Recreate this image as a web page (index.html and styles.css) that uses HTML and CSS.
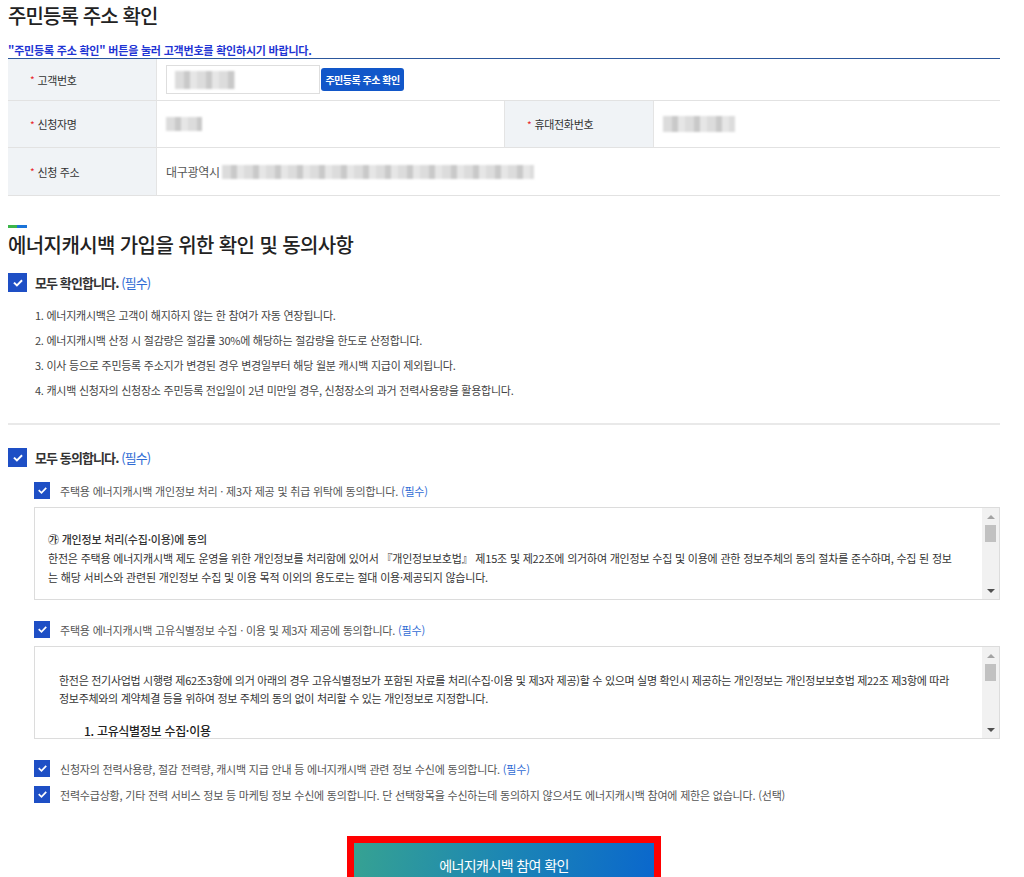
FILE: index.html
```html
<!DOCTYPE html>
<html lang="ko">
<head>
    <meta charset="utf-8">
    <title>에너지캐시백 참여 신청</title>
    <link rel="stylesheet" href="styles.css">
</head>
<body>
<div class="wrap">
    <!-- 주민등록 주소 확인 -->
    <h2 class="page-title">주민등록 주소 확인</h2>
    <p class="notice">"주민등록 주소 확인" 버튼을 눌러 고객번호를 확인하시기 바랍니다.</p>

    <div class="info-table">
        <div class="th"><span class="req">*</span>고객번호</div>
        <div class="td wide">
            <div class="input-box"><span class="blur b-cust"></span></div>
            <button class="btn-check">주민등록 주소 확인</button>
        </div>

        <div class="th"><span class="req">*</span>신청자명</div>
        <div class="td mid"><span class="blur b-name"></span></div>
        <div class="th"><span class="req">*</span>휴대전화번호</div>
        <div class="td"><span class="blur b-phone"></span></div>

        <div class="th"><span class="req">*</span>신청 주소</div>
        <div class="td wide addr">대구광역시<span class="blur b-addr"></span></div>
    </div>

    <!-- 확인 및 동의사항 -->
    <div class="sec-bar"></div>
    <h3 class="sec-title">에너지캐시백 가입을 위한 확인 및 동의사항</h3>

    <div class="chk-row all first">
        <span class="chk big"><svg viewBox="0 0 12 12"><path d="M2.6 6.3l2.3 2.2 4.5-4.6"/></svg></span>
        <span class="all-text">모두 확인합니다. <em class="must">(필수)</em></span>
    </div>
    <ul class="notes">
        <li>1. 에너지캐시백은 고객이 해지하지 않는 한 참여가 자동 연장됩니다.</li>
        <li>2. 에너지캐시백 산정 시 절감량은 절감률 30%에 해당하는 절감량을 한도로 산정합니다.</li>
        <li>3. 이사 등으로 주민등록 주소지가 변경된 경우 변경일부터 해당 월분 캐시백 지급이 제외됩니다.</li>
        <li>4. 캐시백 신청자의 신청장소 주민등록 전입일이 2년 미만일 경우, 신청장소의 과거 전력사용량을 활용합니다.</li>
    </ul>

    <hr class="divider">

    <div class="chk-row all">
        <span class="chk big"><svg viewBox="0 0 12 12"><path d="M2.6 6.3l2.3 2.2 4.5-4.6"/></svg></span>
        <span class="all-text">모두 동의합니다. <em class="must">(필수)</em></span>
    </div>

    <div class="sub">
        <div class="chk-row item gap1">
            <span class="chk"><svg viewBox="0 0 12 12"><path d="M2.6 6.3l2.3 2.2 4.5-4.6"/></svg></span>
            <span>주택용 에너지캐시백 개인정보 처리 · 제3자 제공 및 취급 위탁에 동의합니다. <em class="must">(필수)</em></span>
        </div>
        <div class="terms">
            <div class="terms-body">
                <p class="t-head">㉮ 개인정보 처리(수집·이용)에 동의</p>
                <p>한전은 주택용 에너지캐시백 제도 운영을 위한 개인정보를 처리함에 있어서 『개인정보보호법』 제15조 및 제22조에 의거하여 개인정보 수집 및 이용에 관한 정보주체의 동의 절차를 준수하며, 수집 된 정보는 해당 서비스와 관련된 개인정보 수집 및 이용 목적 이외의 용도로는 절대 이용·제공되지 않습니다.</p>
            </div>
            <div class="scroll">
                <span class="arr up"></span>
                <span class="thumb"></span>
                <span class="arr down"></span>
            </div>
        </div>

        <div class="chk-row item gap2">
            <span class="chk"><svg viewBox="0 0 12 12"><path d="M2.6 6.3l2.3 2.2 4.5-4.6"/></svg></span>
            <span>주택용 에너지캐시백 고유식별정보 수집 · 이용 및 제3자 제공에 동의합니다. <em class="must">(필수)</em></span>
        </div>
        <div class="terms">
            <div class="terms-body second">
                <p>한전은 전기사업법 시행령 제62조3항에 의거 아래의 경우 고유식별정보가 포함된 자료를 처리(수집·이용 및 제3자 제공)할 수 있으며 실명 확인시 제공하는 개인정보는 개인정보보호법 제22조 제3항에 따라 정보주체와의 계약체결 등을 위하여 정보 주체의 동의 없이 처리할 수 있는 개인정보로 지정합니다.</p>
                <p class="t-sub">1. 고유식별정보 수집·이용</p>
            </div>
            <div class="scroll">
                <span class="arr up"></span>
                <span class="thumb"></span>
                <span class="arr down"></span>
            </div>
        </div>

        <div class="chk-row item gap2">
            <span class="chk"><svg viewBox="0 0 12 12"><path d="M2.6 6.3l2.3 2.2 4.5-4.6"/></svg></span>
            <span>신청자의 전력사용량, 절감 전력량, 캐시백 지급 안내 등 에너지캐시백 관련 정보 수신에 동의합니다. <em class="must">(필수)</em></span>
        </div>
        <div class="chk-row item gap3">
            <span class="chk"><svg viewBox="0 0 12 12"><path d="M2.6 6.3l2.3 2.2 4.5-4.6"/></svg></span>
            <span>전력수급상황, 기타 전력 서비스 정보 등 마케팅 정보 수신에 동의합니다. 단 선택항목을 수신하는데 동의하지 않으셔도 에너지캐시백 참여에 제한은 없습니다. (선택)</span>
        </div>
    </div>

    <div class="btn-area">
        <button class="btn-submit">에너지캐시백 참여 확인</button>
    </div>
</div>
</body>
</html>
```

FILE: styles.css
```css
body { margin: 0; background: #fff; color: #333;
    font-family: "Noto Sans CJK KR", "Noto Sans", sans-serif; }
.wrap { width: 992px; margin-left: 8px; padding-bottom: 60px; }

.page-title { margin: 0; padding-top: 2px; font-size: 20px; line-height: 28px; font-weight: 500;
    letter-spacing: -0.9px; color: #222; }
.notice { margin: 12px 0 0; font-size: 11px; line-height: 16px; font-weight: bold;
    letter-spacing: -0.2px; color: #1f35d4; }

/* 정보 테이블 */
.info-table { display: grid; grid-template-columns: 149px 348px 149px 1fr;
    grid-template-rows: 42px 47px 48px; border-top: 1px solid #2c579c; }
.th, .td { display: flex; align-items: center; border-bottom: 1px solid #e2e2e2;
    font-size: 11px; letter-spacing: -0.3px; }
.th { background: #f0f3f6; border-right: 1px solid #e4e4e4; padding-left: 22px; color: #333; }
.td { padding-left: 9px; color: #555; }
.td.wide { grid-column: span 3; }
.td.mid { border-right: 1px solid #e4e4e4; }
.td.addr { font-size: 12px; }
.req { color: #e8262a; margin-right: 3px; font-size: 10px; }

.input-box { width: 154px; height: 29px; border: 1px solid #dedede; display: flex; align-items: center;
    padding-left: 8px; box-sizing: border-box; }
.btn-check { margin-left: 1px; height: 23px; width: 83px; padding: 0; border: none; border-radius: 3px;
    background: #1257c9; color: #fff; font-family: inherit; font-size: 10px; font-weight: bold;
    letter-spacing: -0.5px; }

.blur { display: inline-block; height: 14px; filter: blur(1.2px);
    background: repeating-linear-gradient(90deg, #dcdcdc 0 9px, #c9c9c9 9px 15px, #e6e6e6 15px 22px); }
.b-cust { width: 60px; height: 18px; }
.b-name { width: 36px; }
.b-phone { width: 72px; height: 16px; }
.b-addr { width: 312px; height: 14px; margin-left: 2px; }

/* 동의사항 */
.sec-bar { width: 19px; height: 3px; margin-top: 29px;
    background: linear-gradient(90deg, #3cb54a 0 50%, #1a73d8 50% 100%); }
.sec-title { margin: 4px 0 0; font-size: 20px; line-height: 26px; font-weight: 500;
    letter-spacing: -0.6px; color: #222; }

.chk-row { display: flex; align-items: center; }
.chk { display: inline-flex; align-items: center; justify-content: center; width: 16px; height: 17px;
    background: #1e4fc5; flex: none; }
.chk svg { width: 11px; height: 11px; }
.chk path { fill: none; stroke: #fff; stroke-width: 1.9; stroke-linecap: square; }
.chk.big { width: 19px; height: 19px; }
.chk.big svg { width: 12px; height: 12px; }

.chk-row.all { height: 19px; margin-top: 23px; }
.chk-row.all.first { margin-top: 15px; }
.all-text { margin-left: 8px; font-size: 13px; font-weight: bold; letter-spacing: -0.9px; color: #333; }
.must { font-style: normal; color: #2f6bd4; font-weight: normal; }

.notes { list-style: none; margin: 11px 0 0; padding-left: 27px; }
.notes li { font-size: 11px; line-height: 25px; letter-spacing: -0.25px; color: #444; }

.divider { margin: 20px 0 0; border: none; height: 2px; background: #e9e9e9; }

.sub { padding-left: 26px; }
.chk-row.item { height: 17px; font-size: 11px; letter-spacing: -0.2px; color: #555; }
.chk-row.item > span:last-child { margin-left: 10px; }
.chk-row.gap1 { margin-top: 15px; }
.chk-row.gap2 { margin-top: 21px; }
.chk-row.gap3 { margin-top: 9px; }

.terms { display: flex; height: 93px; margin-top: 8px; border: 1px solid #dcdcdc; box-sizing: border-box; }
.terms-body { flex: 1; overflow: hidden; padding: 22px 22px 0 13px; font-size: 11px; line-height: 19px;
    letter-spacing: -0.2px; color: #333; }
.terms-body.second { padding: 24px 22px 0 24px; line-height: 18px; letter-spacing: -0.3px; }
.terms-body p { margin: 0; }
.t-head { font-weight: 500; }
.t-sub { margin-top: 15px !important; padding-left: 25px; font-size: 12px; font-weight: 500; color: #222; }

.scroll { width: 17px; background: #f1f1f1; display: flex; flex-direction: column; align-items: center; }
.arr { width: 0; height: 0; border-left: 4px solid transparent; border-right: 4px solid transparent; }
.arr.up { margin-top: 7px; border-bottom: 4px solid #a3a3a3; }
.arr.down { margin-top: auto; margin-bottom: 6px; border-top: 4px solid #505050; }
.thumb { width: 11px; height: 17px; margin-top: 6px; background: #c1c1c1; }

.btn-area { display: flex; justify-content: center; margin-top: 40px; }
.btn-submit { width: 300px; height: 44px; border: none; outline: 7px solid #ff0000;
    background: linear-gradient(100deg, #36a292 0%, #1c86b4 50%, #0a67cd 100%);
    color: #fff; font-family: inherit; font-size: 14px; letter-spacing: -0.6px; }
```
